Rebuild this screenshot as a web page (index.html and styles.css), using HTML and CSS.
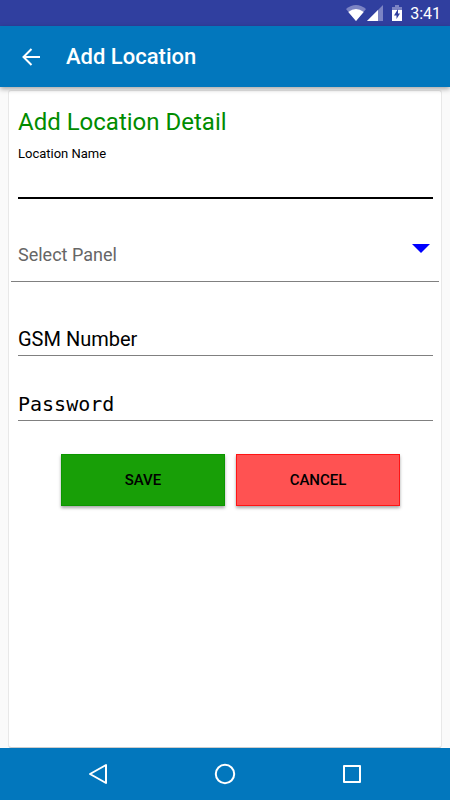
FILE: index.html
```html
<!DOCTYPE html>
<html lang="en">
<head>
<meta charset="utf-8">
<meta name="viewport" content="width=device-width, initial-scale=1">
<title>Add Location</title>
<link rel="stylesheet" href="styles.css">
</head>
<body>
<div class="status">
  <svg width="20" height="16" viewBox="0 0 20 16" aria-hidden="true">
    <path d="M0 4Q10-4 20 4L10 16Z" fill="#7c84c4"/>
    <path d="M2.300 7Q10 1 17.700 7L10 16Z" fill="#fff"/>
  </svg>
  <svg class="signal" width="16" height="16" viewBox="0 0 16 16" aria-hidden="true">
    <path d="M0 16 16 0V16Z" fill="#7c84c4"/>
    <path d="M0 16 11 5V16Z" fill="#fff"/>
  </svg>
  <svg class="battery" width="10" height="16" viewBox="0 0 10 16" aria-hidden="true">
    <path d="M0 5V2H3V0H7V2H10V5Z" fill="#7c84c4"/>
    <path d="M0 5H10V16H0Z" fill="#fff"/>
    <path d="M6 4 2 10.500H4.500V14L8 8.500H6Z" fill="#303f9f"/>
  </svg>
  <time>3:41</time>
</div>
<header class="appbar">
  <button class="icon-button" type="button" aria-label="Back">
    <svg width="18" height="18" viewBox="0 0 18 18" fill="none" stroke="#fff" stroke-width="2" aria-hidden="true">
      <path d="M18 9H1.500M9.500 1 1.500 9l8 8"/>
    </svg>
  </button>
  <h1>Add Location</h1>
</header>
<main class="content">
  <form class="card">
    <h2>Add Location Detail</h2>
    <label class="caption" for="name">Location Name</label>
    <input class="field field-focus" id="name" type="text">
    <div class="select-box">
      <select id="panel" aria-label="Select Panel">
        <option>Select Panel</option>
      </select>
      <svg class="caret" width="18" height="9" viewBox="0 0 18 9" aria-hidden="true"><path d="M0 0H18L9 9Z" fill="#00f"/></svg>
    </div>
    <input class="field field-gsm" type="tel" placeholder="GSM Number" aria-label="GSM Number">
    <input class="field field-password" type="password" placeholder="Password" aria-label="Password">
    <div class="actions">
      <button class="action save" type="button">SAVE</button>
      <button class="action cancel" type="button">CANCEL</button>
    </div>
  </form>
</main>
<nav class="navbar">
  <button class="icon-button" type="button" aria-label="Back">
    <svg width="20" height="22" viewBox="0 0 20 22" fill="none" stroke="#fff" stroke-width="2" stroke-linejoin="round" aria-hidden="true"><path d="M18 2V20L2 11Z"/></svg>
  </button>
  <button class="icon-button" type="button" aria-label="Home">
    <svg width="22" height="22" viewBox="0 0 22 22" fill="none" stroke="#fff" stroke-width="2" aria-hidden="true"><circle cx="11" cy="11" r="9.200"/></svg>
  </button>
  <button class="icon-button" type="button" aria-label="Recent apps">
    <svg width="20" height="20" viewBox="0 0 20 20" fill="none" stroke="#fff" stroke-width="2" stroke-linejoin="round" aria-hidden="true"><path d="M2 2H18V18H2Z"/></svg>
  </button>
</nav>
</body>
</html>
```
FILE: styles.css
```css
* {
  box-sizing: border-box;
}

body {
  margin: 0;
  min-height: 100vh;
  display: flex;
  flex-direction: column;
  background: #fafafa;
  color: #000;
  font-family: Roboto, sans-serif;
}

button,
input,
select {
  font: inherit;
  color: inherit;
}

h1,
h2 {
  margin: 0;
}

svg {
  display: block;
}

.status {
  height: 26px;
  padding: 0 9px;
  display: flex;
  align-items: center;
  justify-content: flex-end;
  background: #303f9f;
  color: #fff;
  font-size: 16px;
}

.signal {
  margin-left: 1px;
}

.battery {
  margin: 0 8px 0 9px;
}

.appbar {
  height: 61px;
  padding: 0 16px;
  display: flex;
  align-items: center;
  gap: 20px;
  position: relative;
  background: #0277bd;
  color: #fff;
  box-shadow: 0 2px 5px rgba(0, 0, 0, 0.35);
}

.appbar h1 {
  font-size: 22px;
  font-weight: 500;
}

.icon-button {
  width: 30px;
  height: 30px;
  padding: 0;
  border: 0;
  display: flex;
  align-items: center;
  justify-content: center;
  background: none;
}

.content {
  flex: 1;
  display: flex;
  padding: 3px 8px 0;
}

.card {
  flex: 1;
  display: flex;
  flex-direction: column;
  padding: 16px 8px 16px 9px;
  border: 1px solid #e8e8e8;
  border-bottom-color: #ccc;
  border-radius: 3px;
  background: #fff;
}

.card h2 {
  color: #008c00;
  font-size: 24px;
  font-weight: 400;
  line-height: 30px;
}

.caption {
  margin-top: 9px;
  font-size: 13px;
  line-height: 16px;
}

.field {
  width: 100%;
  height: 32px;
  padding: 0 0 2px;
  border: 0;
  border-bottom: 1px solid #808080;
  border-radius: 0;
  outline: 0;
  background: none;
  font-size: 20px;
}

.field::placeholder {
  color: #000;
  opacity: 1;
}

.field-focus {
  height: 37px;
  border-bottom: 2px solid #000;
}

.field-gsm {
  margin-top: 42px;
}

.field-password {
  margin-top: 33px;
  font-family: "DejaVu Sans Mono", monospace;
}

.select-box {
  position: relative;
  margin: 28px -6px 0 -7px;
}

.select-box select {
  width: 100%;
  height: 55px;
  padding: 0 7px;
  border: 0;
  border-bottom: 1px solid #808080;
  border-radius: 0;
  appearance: none;
  background: none;
  color: #666;
  font-size: 18px;
}

.caret {
  position: absolute;
  top: 17px;
  right: 9px;
  pointer-events: none;
}

.actions {
  display: flex;
  gap: 11px;
  margin: 33px 33px 0 43px;
}

.action {
  flex: 1;
  height: 52px;
  padding: 0;
  border: 1px solid;
  font-size: 15px;
  font-weight: 500;
  box-shadow: 0 2px 3px rgba(0, 0, 0, 0.35);
}

.save {
  background: #189f07;
  border-color: #0c9600;
}

.cancel {
  background: #ff5252;
  border-color: #ff1414;
}

.navbar {
  height: 52px;
  display: flex;
  align-items: center;
  justify-content: center;
  gap: 97px;
  background: #0277bd;
}
```
